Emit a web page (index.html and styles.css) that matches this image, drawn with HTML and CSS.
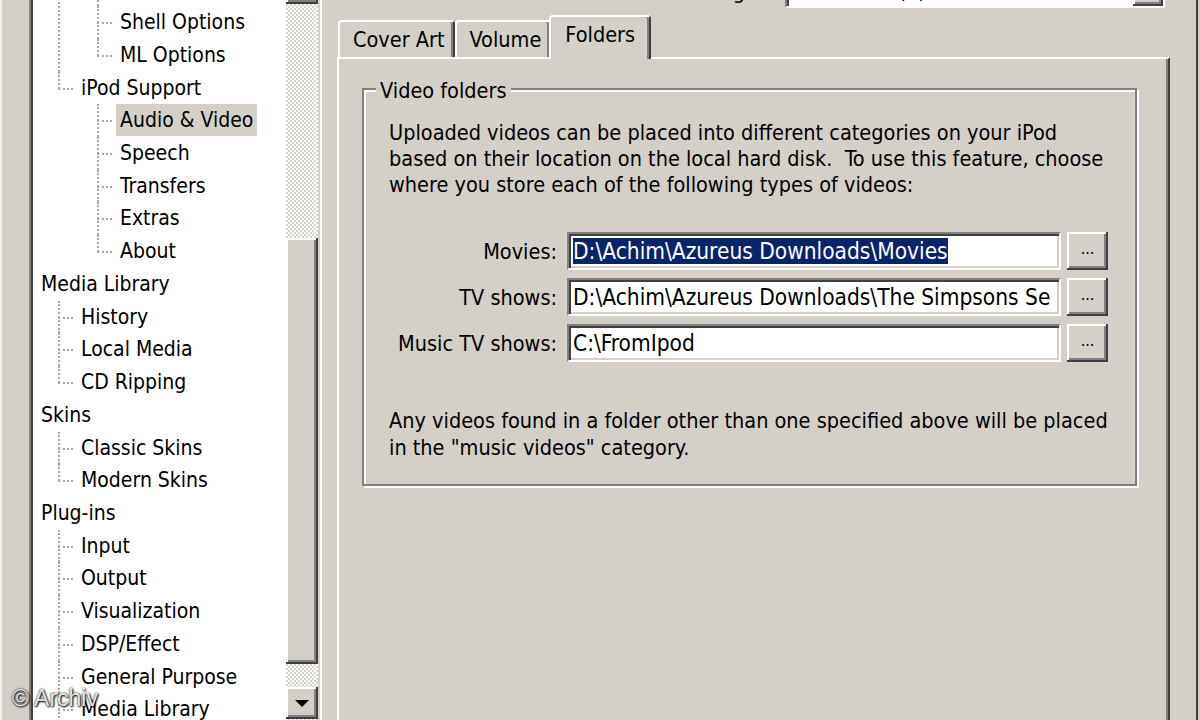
FILE: index.html
```html
<!DOCTYPE html>
<html>
<head>
<meta charset="utf-8">
<title>Preferences</title>
<link rel="stylesheet" href="styles.css">
</head>
<body>
<div class="nav">
  <div class="frame">
    <div class="frame-inner">
      <div class="tree">
        <ul class="root">
          <li><span class="row"><span class="label">General Preferences</span></span>
            <ul>
              <li><span class="row"><span class="label">Options</span></span>
                <ul>
                  <li><span class="row"><span class="label">Language</span></span></li>
                  <li><span class="row"><span class="label">Shell Options</span></span></li>
                  <li><span class="row"><span class="label">ML Options</span></span></li>
                </ul>
              </li>
              <li><span class="row"><span class="label">iPod Support</span></span>
                <ul>
                  <li><span class="row"><span class="label selected">Audio &amp; Video</span></span></li>
                  <li><span class="row"><span class="label">Speech</span></span></li>
                  <li><span class="row"><span class="label">Transfers</span></span></li>
                  <li><span class="row"><span class="label">Extras</span></span></li>
                  <li><span class="row"><span class="label">About</span></span></li>
                </ul>
              </li>
            </ul>
          </li>
          <li><span class="row"><span class="label">Media Library</span></span>
            <ul>
              <li><span class="row"><span class="label">History</span></span></li>
              <li><span class="row"><span class="label">Local Media</span></span></li>
              <li><span class="row"><span class="label">CD Ripping</span></span></li>
            </ul>
          </li>
          <li><span class="row"><span class="label">Skins</span></span>
            <ul>
              <li><span class="row"><span class="label">Classic Skins</span></span></li>
              <li><span class="row"><span class="label">Modern Skins</span></span></li>
            </ul>
          </li>
          <li><span class="row"><span class="label">Plug-ins</span></span>
            <ul>
              <li><span class="row"><span class="label">Input</span></span></li>
              <li><span class="row"><span class="label">Output</span></span></li>
              <li><span class="row"><span class="label">Visualization</span></span></li>
              <li><span class="row"><span class="label">DSP/Effect</span></span></li>
              <li><span class="row"><span class="label">General Purpose</span></span></li>
              <li><span class="row"><span class="label">Media Library</span></span></li>
              <li><span class="row"><span class="label">Portables</span></span></li>
            </ul>
          </li>
        </ul>
      </div>
      <div class="scrollbar">
        <div class="sb-btn"><span class="arrow up"></span></div>
        <div class="sb-track top"></div>
        <div class="sb-thumb"></div>
        <div class="sb-track bottom"></div>
        <div class="sb-btn"><span class="arrow down"></span></div>
      </div>
    </div>
  </div>
</div>

<div class="main">
  <div class="topbar">
    <span class="toplabel">Encoding</span>
    <div class="combo">
      <span class="combo-text">Automatic (1)</span>
      <span class="combo-btn"><span class="arrow down"></span></span>
    </div>
  </div>

  <div class="tabs">
    <div class="tab">Cover Art</div>
    <div class="tab">Volume</div>
    <div class="tab active">Folders</div>
  </div>

  <div class="panel">
    <div class="group">
      <div class="legend">Video folders</div>
      <p class="intro">Uploaded videos can be placed into different categories on your iPod<br>based on their location on the local hard disk.&nbsp; To use this feature, choose<br>where you store each of the following types of videos:</p>
      <div class="fields">
        <label class="field-label">Movies:</label>
        <div class="input"><span class="sel">D:\Achim\Azureus Downloads\Movies</span></div>
        <button class="browse">...</button>

        <label class="field-label">TV shows:</label>
        <div class="input"><span>D:\Achim\Azureus Downloads\The Simpsons Se</span></div>
        <button class="browse">...</button>

        <label class="field-label">Music TV shows:</label>
        <div class="input"><span>C:\FromIpod</span></div>
        <button class="browse">...</button>
      </div>
      <p class="note">Any videos found in a folder other than one specified above will be placed<br>in the &quot;music videos&quot; category.</p>
    </div>
  </div>
</div>

<div class="watermark">© Archiv</div>
</body>
</html>
```

FILE: styles.css
```css
* { box-sizing: border-box; }

html, body { margin: 0; padding: 0; }

body {
  width: 1200px;
  height: 720px;
  overflow: hidden;
  display: flex;
  position: relative;
  background: #d4d0c8;
  color: #000;
  font-family: "DejaVu Sans Condensed", "DejaVu Sans", sans-serif;
}

/* ---------- left navigation tree ---------- */
.nav {
  width: 322px;
  flex: none;
  padding-left: 27px;
  border-left: 2px solid #f2f0ec;
}

.frame {
  margin-top: -32px;
  height: 800px;
  display: flex;
  border: 2px solid;
  border-color: #808080 #fff #fff #808080;
}

.frame-inner {
  flex: 1;
  display: flex;
  border: 2px solid;
  border-color: #404040 #d4d0c8 #d4d0c8 #404040;
}

.tree {
  flex: 1;
  min-width: 0;
  background: #fff;
  overflow: hidden;
  font-size: 21px;
}

.tree ul { list-style: none; margin: 0; padding: 0; }
.tree > ul { margin-top: -64px; padding-left: 4px; }
.tree ul ul { padding-left: 40px; }
.tree ul ul ul { padding-left: 39px; }

.tree li { position: relative; }

.tree ul ul > li::before {
  content: "";
  position: absolute;
  left: -19px;
  top: 0;
  bottom: 0;
  border-left: 2px dotted #a8a8a8;
}
.tree ul ul > li:last-child::before { bottom: auto; height: 17px; }

.row {
  display: block;
  position: relative;
  height: 32.72px;
  line-height: 32.72px;
  white-space: nowrap;
}
.tree ul ul > li > .row::before {
  content: "";
  position: absolute;
  left: -19px;
  top: 16px;
  width: 15px;
  border-top: 2px dotted #a8a8a8;
}

.label {
  display: inline-block;
  padding: 0 4px;
  height: 32px;
}
.label.selected { background: #d4d0c8; }

/* scrollbar */
.scrollbar {
  width: 32px;
  flex: none;
  display: flex;
  flex-direction: column;
  background: repeating-conic-gradient(#ffffff 0 25%, #d8d5ce 0 50%) 0 0 / 4px 4px;
}
.sb-btn, .sb-thumb, .combo-btn, .browse {
  background: #d4d0c8;
  box-shadow: inset -2px -2px #404040, inset 2px 2px #fff, inset -4px -4px #808080;
}
.sb-btn {
  height: 32px;
  flex: none;
  display: flex;
  align-items: center;
  justify-content: center;
}
.sb-track.top { height: 234px; flex: none; }
.sb-thumb { height: 426px; flex: none; }
.sb-track.bottom { height: 23px; flex: none; }

.arrow { width: 0; height: 0; border-left: 7px solid transparent; border-right: 7px solid transparent; }
.arrow.down { border-top: 7px solid #000; }
.arrow.up { border-bottom: 7px solid #000; }

/* ---------- main area ---------- */
.main {
  flex: 1;
  min-width: 0;
  display: flex;
  flex-direction: column;
  padding: 0 26px 0 15px;
  border-right: 2px solid #404040;
  margin-right: 2px;
  font-size: 21.5px;
}

.topbar {
  flex: none;
  height: 40px;
  margin-top: -32px;
  display: flex;
  align-items: flex-end;
  justify-content: flex-end;
  padding-right: 5px;
}
.toplabel {
  line-height: 24px;
  margin: 0 40px 4px 0;
}
.combo {
  width: 380px;
  height: 34px;
  display: flex;
  align-items: center;
  background: #fff;
  border: 2px solid;
  border-color: #808080 #fff #fff #808080;
  box-shadow: inset 2px 2px #404040;
}
.combo-text { flex: 1; padding-left: 6px; line-height: 26px; }
.combo-btn {
  width: 30px;
  height: 30px;
  display: flex;
  align-items: center;
  justify-content: center;
}

/* tabs */
.tabs {
  flex: none;
  display: flex;
  align-items: flex-end;
  margin-top: 7px;
  padding-left: 1px;
}
.tab {
  height: 37px;
  line-height: 35px;
  padding: 0 8px 0 13px;
  border-top: 2px solid #fff;
  border-left: 2px solid #fff;
  border-right: 2px solid #404040;
  box-shadow: inset -2px 0 #808080;
  border-radius: 4px 4px 0 0;
  white-space: nowrap;
}
.tab.active {
  position: relative;
  z-index: 1;
  height: 44px;
  line-height: 36px;
  margin: 0 -2px -2px -2px;
  padding: 0 14px;
  background: #d4d0c8;
}

.panel {
  flex: 1;
  border-top: 2px solid #fff;
  border-left: 2px solid #fff;
  border-right: 2px solid #404040;
  box-shadow: inset -2px 0 #808080;
}

.group {
  margin: 29px 31px 0 23px;
  border: 2px solid #808080;
  box-shadow: inset 2px 2px #fff, 2px 2px #fff;
  padding: 0 20px 23px 25px;
}
.legend {
  display: table;
  margin: -12px 0 0 -13px;
  padding: 0 4px;
  background: #d4d0c8;
  line-height: 26px;
}
.intro {
  margin: 16px 0 0;
  line-height: 26px;
  white-space: nowrap;
}

.fields {
  margin-top: 34px;
  display: grid;
  grid-template-columns: 172px 494px 41px;
  grid-auto-rows: 38px;
  column-gap: 6px;
  row-gap: 8px;
  align-items: center;
}
.field-label {
  text-align: right;
  padding-right: 4px;
  white-space: nowrap;
}
.input {
  height: 38px;
  display: flex;
  align-items: center;
  overflow: hidden;
  white-space: nowrap;
  background: #fff;
  border: 2px solid;
  border-color: #808080 #fff #fff #808080;
  box-shadow: inset 2px 2px #404040, inset -2px -2px #d4d0c8;
  padding-left: 4px;
  font-size: 22.5px;
}
.input span { line-height: 26px; }
.input .sel { background: #0a246a; color: #fff; }

.browse {
  height: 38px;
  border: 0;
  padding: 0 0 6px;
  font: inherit;
  font-size: 16px;
  color: #000;
}

.note {
  margin: 45px 0 0;
  line-height: 27px;
  white-space: nowrap;
}

/* watermark overlay */
.watermark {
  position: absolute;
  left: 12px;
  bottom: 8px;
  font-family: "Liberation Sans", Arial, sans-serif;
  font-size: 23px;
  color: rgba(255, 255, 255, 0.9);
  text-shadow: 0 0 2px #000, 1px 1px 2px #000;
}
```
